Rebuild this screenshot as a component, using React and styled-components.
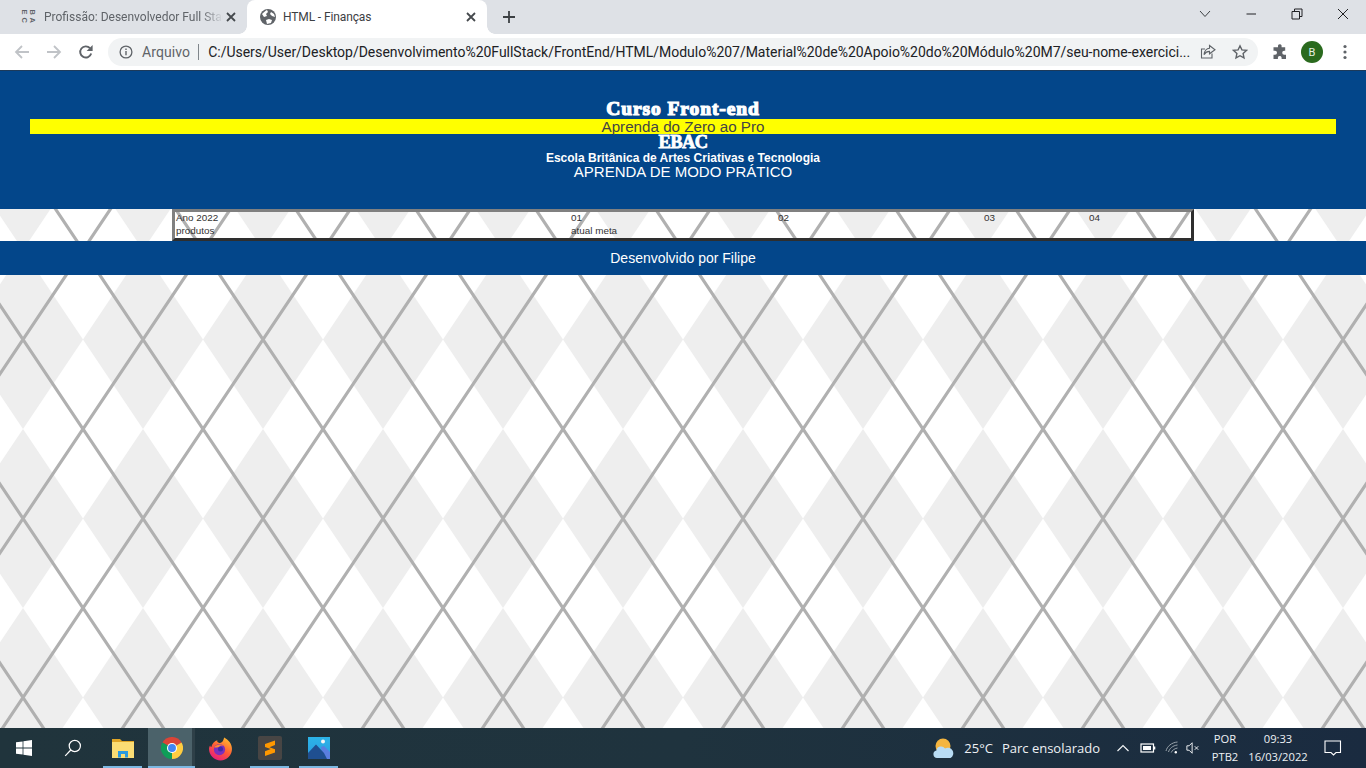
import React from "react";
import styled, { createGlobalStyle } from "styled-components";

const tile = encodeURIComponent(`<svg xmlns="http://www.w3.org/2000/svg" width="120" height="179" viewBox="0 0 120 179"><rect width="120" height="179" fill="#fff"/><path d="M60 0L120 89.5L60 179L0 89.5Z" fill="#eee"/><path d="M-12 -17.900L132 196.900M132 -17.900L-12 196.900" stroke="#b0b0b0" stroke-width="3.200" fill="none"/></svg>`);

const Global = createGlobalStyle`
  html, body { margin: 0; padding: 0; width: 1366px; height: 768px; overflow: hidden; }
  body { font-family: "Liberation Sans", Arial, sans-serif; }
`;

const Screen = styled.div`
  width: 1366px; height: 768px; display: flex; flex-direction: column; overflow: hidden; background: #fff;
`;
const TabStrip = styled.div`
  height: 34px; background: #dee1e6; display: flex; align-items: flex-end; flex: none;
`;
const Tab = styled.div`
  height: 34px; display: flex; align-items: center; box-sizing: border-box; flex: none;
  width: ${p => p.$w}px; padding: 0 8px 0 ${p => p.$pl}px; position: relative;
  background: ${p => (p.$active ? "#fff" : "transparent")};
  border-radius: 8px 8px 0 0;
  color: ${p => (p.$active ? "#3c4043" : "#5f6368")};
`;
const TabCurve = styled.span`
  position: absolute; bottom: 0; width: 8px; height: 8px; ${p => (p.$left ? "left:-8px" : "right:-8px")};
  background: radial-gradient(circle at ${p => (p.$left ? "0 0" : "100% 0")}, transparent 7.5px, #fff 8px);
`;
const TabTitle = styled.span`
  font: 12px "Roboto", sans-serif; margin-left: ${p => (p.$fade ? 8 : 7)}px; flex: 1; white-space: nowrap; overflow: hidden; width: 0;
  letter-spacing: ${p => (p.$fade ? "0" : "-.12px")};
  ${p => p.$fade && "-webkit-mask-image: linear-gradient(90deg,#000 88%,transparent 100%);"}
`;
const NewTab = styled.div`
  margin-left: 14px; width: 16px; height: 34px; display: flex; align-items: center; justify-content: center;
`;
const WindowBtns = styled.div`
  margin-left: auto; display: flex; height: 28px; align-self: flex-start; align-items: center;
`;
const WinBtn = styled.div`
  width: 46px; height: 28px; display: flex; align-items: center; justify-content: center;
`;
const Toolbar = styled.div`
  height: 37px; background: #fff; display: flex; align-items: center; flex: none; box-sizing: border-box; padding: 0 0 0 14px;
  border-bottom: 1px solid #1d3a5a;
`;
const NavIcon = styled.div`
  width: ${p => p.$w}px; display: flex; align-items: center; flex: none; margin-left: ${p => p.$ml || 0}px;
`;
const Omnibox = styled.div`
  width: 1150px; height: 28px; border-radius: 14px; background: #f1f3f4; display: flex; align-items: center; flex: none;
  box-sizing: border-box; padding-left: 11px; font-family: "Roboto", sans-serif; font-size: 14px; color: #202124; margin-top: -1px;
`;
const Chip = styled.span`
  color: #5f6368; margin-left: 9px; font-size: 14px; letter-spacing: .1px;
`;
const Sep = styled.span`
  width: 1px; height: 16px; background: #80868b; margin: 0 9px 0 8px;
`;
const Url = styled.span`
  font-size: 14px; white-space: nowrap; width: 982px; flex: none; letter-spacing: -.024px; color: #202124;
`;
const OmniIcons = styled.div`
  display: flex; align-items: center; gap: 16px; margin-left: 10px;
`;
const Avatar = styled.div`
  width: 22px; height: 22px; border-radius: 50%; background: #2a6a1e; color: #e8f0e4; font: 11px "Roboto", sans-serif;
  display: flex; align-items: center; justify-content: center; flex: none; margin-left: 13px;
`;
const Right = styled.div`
  display: flex; align-items: center; margin-left: 14px; flex: none;
`;
const Page = styled.main`
  flex: 1; min-height: 0; background: #fff url("data:image/svg+xml,${tile}") -37px 0 repeat;
`;
const Header = styled.header`
  height: 138px; background: #03468a; box-sizing: border-box; padding: 29px 30px 0; text-align: center; color: #fff;
`;
const Title = styled.h1`
  margin: 0; height: 19px; font: 700 19.5px/17px "Liberation Serif", serif; -webkit-text-stroke: 1.2px #fff; letter-spacing: .9px;
`;
const Slogan = styled.p`
  margin: 0; height: 15px; background: #ff0; color: #444; font-size: 15.2px; line-height: 15px;
`;
const Brand = styled.h2`
  margin: 0; font: 700 18.5px/16px "Liberation Serif", serif; -webkit-text-stroke: .8px #fff; letter-spacing: -.6px;
`;
const School = styled.p`
  margin: 0; font-weight: 700; font-size: 12px; line-height: 16px;
`;
const Motto = styled.p`
  margin: -2px 0 0; font-size: 15px; line-height: 15px;
`;
const Table = styled.table`
  width: 1022px; height: 32px; margin-left: 172px; border-collapse: separate; border-spacing: 0; box-sizing: border-box;
  border-width: 3px; border-style: solid; border-color: #808080 #2e2e2e #2e2e2e #808080;
  font-size: 9.9px; color: #333; table-layout: fixed;
`;
const Cell = styled.td`
  padding: 0 0 1px 1px; line-height: 12px; height: 12px; width: ${p => p.$w}px;
`;
const Footer = styled.footer`
  height: 34px; background: #03468a; color: #fff; font-size: 14px; display: flex; align-items: center; justify-content: center;
`;
const Taskbar = styled.div`
  height: 40px; flex: none; display: flex; align-items: center; background: linear-gradient(90deg, #20343c 0%, #1f333e 50%, #1a2b40 100%); color: #eef1f4;
  font-family: "Open Sans", "Noto Sans", sans-serif;
`;
const Start = styled.div`
  width: 49px; height: 40px; display: flex; align-items: center; justify-content: center; flex: none; box-sizing: border-box; padding-right: 2px;
`;
const TaskBtn = styled.div`
  width: 49px; height: 40px; display: flex; align-items: center; justify-content: center; position: relative; flex: none; box-sizing: border-box;
  padding-right: ${p => p.$pr || 0}px;
  ${p => p.$on && "background: linear-gradient(90deg, transparent 1px, #4b626a 1px, #4b626a 45px, #2e4048 45px, #2e4048 48px, transparent 48px);"}
  &::after { content: ""; display: ${p => (p.$run ? "block" : "none")}; position: absolute; left: ${p => (p.$on ? "1px" : "5px")}; right: ${p => (p.$on ? "1px" : "5px")}; bottom: 0; height: 2px; background: #7cb8e2; }
`;
const Tray = styled.div`
  margin-left: auto; display: flex; align-items: center; height: 40px; padding-right: 10px;
`;
const Weather = styled.span`
  font-size: 13px; white-space: nowrap; margin-left: 10px;
`;
const WeatherDesc = styled.span`
  font-size: 13px; white-space: nowrap; margin-left: 9px;
`;
const Stack = styled.div`
  display: flex; flex-direction: column; align-items: center; font-size: 11.2px; line-height: 18px; width: ${p => p.$w}px; flex: none; margin-left: ${p => p.$ml}px;
`;
const TrayIcon = styled.div`
  display: flex; align-items: center; justify-content: center; width: ${p => p.$w}px; flex: none; margin-left: ${p => p.$ml || 0}px;
`;

const X = ({ c = "#45494d" }) => (
  <svg width="16" height="16" viewBox="0 0 16 16"><path d="M4 4l8 8M12 4l-8 8" stroke={c} strokeWidth="1.8" /></svg>
);
const Globe = () => (
  <svg width="16" height="16" viewBox="0 0 16 16">
    <circle cx="8" cy="8" r="8" fill="#5f6368" />
    <path d="M2 5c2-2 3-3 5-4l1 2-2 2 1 2-3 1zM7 15l-1-4 3-1 3 1-1 3zM11 3l3 2 1 3-3-1-2-2z" fill="#fff" />
  </svg>
);
const EbacIcon = () => (
  <svg width="16" height="16" viewBox="0 0 16 16" overflow="visible" fill="#5f6368" fontFamily="Liberation Sans" fontWeight="700" fontSize="7.5">
    <text transform="translate(1 0.5) rotate(90)" x="0" y="-1">E</text>
    <text transform="translate(9 0.5) rotate(90)" x="0" y="-1">B</text>
    <text transform="translate(1 8.5) rotate(90)" x="0" y="-1">C</text>
    <text transform="translate(9 8.5) rotate(90)" x="0" y="-1">A</text>
  </svg>
);
const Arrow = ({ d }) => (
  <svg width="16" height="16" viewBox="0 0 16 16"><path d={d} stroke="#c0c3c7" strokeWidth="1.8" fill="none" /></svg>
);
const Reload = () => (
  <svg width="16" height="16" viewBox="0 0 16 16" fill="none">
    <path d="M13.2 9.500A5.600 5.600 0 1 1 12 4.200" stroke="#5f6368" strokeWidth="1.900" />
    <path d="M14.600 1v6h-6z" fill="#5f6368" />
  </svg>
);
const Info = () => (
  <svg width="14" height="14" viewBox="0 0 14 14" fill="none">
    <circle cx="7" cy="7" r="5.900" stroke="#5f6368" strokeWidth="1.300" />
    <path d="M7 6v4.200M7 3.600v1.300" stroke="#5f6368" strokeWidth="1.400" />
  </svg>
);
const Share = () => (
  <svg width="16" height="16" viewBox="0 0 16 16" fill="none" stroke="#5f6368" strokeWidth="1.100">
    <path d="M12 9.500V14H1.500V5H5" />
    <path d="M9.500 1.500l5.500 4.300-5.500 4V7.400C7 7.400 5.500 8.400 4 10.600 4.500 7 6.500 4.400 9.500 4.200z" />
  </svg>
);
const Star = () => (
  <svg width="16" height="16" viewBox="0 0 16 16">
    <path d="M8 1.800l1.900 4.100 4.500.5-3.300 3 .9 4.500L8 11.700l-4 2.200.9-4.500-3.300-3 4.500-.5z" fill="none" stroke="#5f6368" strokeWidth="1.400" />
  </svg>
);
const Puzzle = () => (
  <svg width="16" height="16" viewBox="0 0 16 16">
    <path d="M6 1.500a1.900 1.900 0 0 1 3.600 0V3.300h3.600v3.400h-1a2 2 0 1 0 0 4h1.800V15H9.600v-1.600a1.900 1.900 0 0 0-3.700 0V15H1.500v-4.200H3a2 2 0 1 0 0-4H1.500V3.300H6z" fill="#5f6368" />
  </svg>
);
const Dots = () => (
  <svg width="4" height="16" viewBox="0 0 4 16" fill="#5f6368">
    <circle cx="2" cy="2.500" r="1.600" /><circle cx="2" cy="8" r="1.600" /><circle cx="2" cy="13.500" r="1.600" />
  </svg>
);
const Windows = () => (
  <svg width="16" height="16" viewBox="0 0 16 16" fill="#fff">
    <path d="M0 2.300l6.600-.9v6.200H0zM7.400 1.300L16 0v7.600H7.400zM0 8.400h6.600v6.200L0 13.700zM7.400 8.400H16V16l-8.600-1.300z" />
  </svg>
);
const Search = () => (
  <svg width="18" height="18" viewBox="0 0 18 18" fill="none" stroke="#fff" strokeWidth="1.200">
    <circle cx="10.800" cy="7" r="5.600" /><path d="M6.800 11L1.200 16.800" />
  </svg>
);
const Explorer = () => (
  <svg width="22" height="19" viewBox="0 0 22 19">
    <path d="M0 0h8l2 2h12v17H0z" fill="#e0a526" />
    <rect x="0" y="3" width="22" height="16" fill="#fbdd74" />
    <path d="M6 18.500V12h10v6.500h-3V15H9v3.500z" fill="#2a9ae0" />
  </svg>
);
const Chrome = () => (
  <svg width="22" height="22" viewBox="0 0 48 48">
    <path d="M24 24L44.800 12A24 24 0 0 0 3.200 12z" fill="#db4437" />
    <path d="M24 24L3.200 12A24 24 0 0 0 24 48z" fill="#0f9d58" />
    <path d="M24 24L24 48A24 24 0 0 0 44.800 12z" fill="#ffcd40" />
    <circle cx="24" cy="24" r="11" fill="#fff" /><circle cx="24" cy="24" r="8.600" fill="#4285f4" />
  </svg>
);
const Firefox = () => (
  <svg width="25" height="25" viewBox="0 0 24 24">
    <defs>
      <linearGradient id="ff" x1="0.8" y1="0" x2="0.2" y2="1"><stop offset="0" stopColor="#ffbd2e" /><stop offset=".5" stopColor="#ff5a36" /><stop offset="1" stopColor="#e31587" /></linearGradient>
    </defs>
    <path d="M2 9c.4 1 .8 1.400 1.200 1.600C4 7 6.500 4.600 9 4c-.6 1.600.4 2.200 2 2.600C14 7 15 3.500 15.500 1.500c4 2 7.500 6 7.500 11A11 11 0 0 1 1 12.500C1 11 1.400 10 2 9z" fill="url(#ff)" />
    <circle cx="11" cy="13" r="5.400" fill="#7b2fbe" />
    <circle cx="12" cy="12.500" r="2.400" fill="#3f2aa8" />
    <path d="M6 11c2-3 6-3.500 9-1.800-2-.2-3.600.2-4.500 1.300C9 11 7.500 11 6 11z" fill="#ff8a2e" />
  </svg>
);
const Sublime = () => (
  <svg width="24" height="24" viewBox="0 0 24 24">
    <rect width="24" height="24" rx="2" fill="#474544" />
    <path d="M17 4.500V9l-5.500 2.200L17 13.200V16.500L7 20v-4.800l5.700-2.200L7 11V8z" fill="#ff9800" />
  </svg>
);
const Photos = () => (
  <svg width="22" height="22" viewBox="0 0 22 22">
    <defs><linearGradient id="ph" x1="0" y1="0" x2="0" y2="1"><stop offset="0" stopColor="#2cb4e8" /><stop offset="1" stopColor="#2a9ce0" /></linearGradient></defs>
    <rect width="22" height="22" fill="url(#ph)" />
    <circle cx="15" cy="4.500" r="2" fill="#f4f4f4" />
    <path d="M13 10l3-1 6 6v7H15z" fill="#5a7ee0" />
    <path d="M0 16L8 7.500l8 8.500 3 6H0z" fill="#1f4f90" />
  </svg>
);
const Cloud = () => (
  <svg width="21" height="21" viewBox="0 0 21 21">
    <circle cx="10" cy="8" r="7.500" fill="#f4b53f" />
    <path d="M4 20a3.800 3.800 0 0 1-.6-7.500A4.800 4.800 0 0 1 12 10.400 4.800 4.800 0 0 1 17.500 20z" fill="#b8dcf4" />
  </svg>
);
const Chevron = () => (
  <svg width="14" height="14" viewBox="0 0 14 14" fill="none" stroke="#f0f3f5" strokeWidth="1.200"><path d="M1.500 10L7 4.500 12.500 10" /></svg>
);
const Battery = () => (
  <svg width="16" height="12" viewBox="0 0 16 12" fill="none">
    <rect x="1" y="2" width="12.500" height="8" stroke="#fff" strokeWidth="1.200" />
    <rect x="3" y="4" width="8" height="4" fill="#fff" />
    <rect x="14" y="4.500" width="1.300" height="3" fill="#fff" />
  </svg>
);
const Wifi = () => (
  <svg width="14" height="14" viewBox="0 0 14 14" fill="none" stroke="#9aa4ac" strokeWidth="1">
    <path d="M1 10C2 5.500 6.500 1.500 12.500 1M3.500 11C4.200 8 7.500 4.500 12.500 4M6.200 11.500C6.800 9.800 9.200 7.500 12.500 7" />
    <circle cx="10.800" cy="11.200" r="1.200" fill="#fff" stroke="none" />
  </svg>
);
const Mute = () => (
  <svg width="16" height="14" viewBox="0 0 16 14" fill="none" stroke="#f0f3f5" strokeWidth="1.100">
    <path d="M1 4.500h2.500L7 1v12L3.500 9.500H1zM10 5l4 4M14 5l-4 4" />
  </svg>
);
const Notify = () => (
  <svg width="18" height="16" viewBox="0 0 18 16" fill="none" stroke="#fff" strokeWidth="1.100">
    <path d="M1 1h15.500v11.500H12L9.500 15 7 12.500H1z" />
  </svg>
);

export default function App() {
  return (
    <Screen>
      <Global />
      <TabStrip>
        <Tab $w={247} $pl={20}>
          <EbacIcon />
          <TabTitle $fade>Profissão: Desenvolvedor Full Stack</TabTitle>
          <X />
        </Tab>
        <Tab $w={240} $pl={13} $active>
          <TabCurve $left /><Globe />
          <TabTitle>HTML - Finanças</TabTitle>
          <X /><TabCurve />
        </Tab>
        <NewTab>
          <svg width="14" height="14" viewBox="0 0 14 14"><path d="M7 1v12M1 7h12" stroke="#3c4043" strokeWidth="1.800" /></svg>
        </NewTab>
        <WindowBtns>
          <WinBtn>
            <svg width="12" height="8" viewBox="0 0 12 8" fill="none" stroke="#3c4043"><path d="M1 1l5 5.500L11 1" /></svg>
          </WinBtn>
          <WinBtn>
            <svg width="12" height="2" viewBox="0 0 12 2"><path d="M1.500 1h9.500" stroke="#202124" /></svg>
          </WinBtn>
          <WinBtn>
            <svg width="12" height="12" viewBox="0 0 12 12" fill="none" stroke="#202124"><path d="M1 3.500h7.500V11H1zM3.500 3.500V1H11v7.500H8.500" /></svg>
          </WinBtn>
          <WinBtn>
            <svg width="12" height="12" viewBox="0 0 12 12" fill="none" stroke="#202124"><path d="M1 1l10 10M11 1L1 11" /></svg>
          </WinBtn>
        </WindowBtns>
      </TabStrip>
      <Toolbar>
        <NavIcon $w={32}><Arrow d="M15 8H2M8 2L2 8l6 6" /></NavIcon>
        <NavIcon $w={32}><Arrow d="M1 8h13M8 2l6 6-6 6" /></NavIcon>
        <NavIcon $w={30}><Reload /></NavIcon>
        <Omnibox>
          <Info />
          <Chip>Arquivo</Chip>
          <Sep />
          <Url>C:/Users/User/Desktop/Desenvolvimento%20FullStack/FrontEnd/HTML/Modulo%207/Material%20de%20Apoio%20do%20Módulo%20M7/seu-nome-exercici...</Url>
          <OmniIcons><Share /><Star /></OmniIcons>
        </Omnibox>
        <Right>
          <Puzzle />
          <Avatar>B</Avatar>
          <NavIcon $w={4} $ml={20}><Dots /></NavIcon>
        </Right>
      </Toolbar>
      <Page>
        <Header>
          <Title>Curso Front-end</Title>
          <Slogan>Aprenda do Zero ao Pro</Slogan>
          <Brand>EBAC</Brand>
          <School>Escola Britânica de Artes Criativas e Tecnologia</School>
          <Motto>APRENDA DE MODO PRÁTICO</Motto>
        </Header>
        <Table>
          <tbody>
            <tr>
              <Cell $w={394}>Ano 2022</Cell>
              <Cell $w={206}>01</Cell>
              <Cell $w={205}>02</Cell>
              <Cell $w={104}>03</Cell>
              <Cell>04</Cell>
            </tr>
            <tr>
              <Cell>produtos</Cell>
              <Cell>atual meta</Cell>
              <Cell />
              <Cell />
              <Cell />
            </tr>
          </tbody>
        </Table>
        <Footer>Desenvolvido por Filipe</Footer>
      </Page>
      <Taskbar>
        <Start><Windows /></Start>
        <TaskBtn $pr={2}><Search /></TaskBtn>
        <TaskBtn $run><Explorer /></TaskBtn>
        <TaskBtn $on $run><Chrome /></TaskBtn>
        <TaskBtn><Firefox /></TaskBtn>
        <TaskBtn $run><Sublime /></TaskBtn>
        <TaskBtn $run><Photos /></TaskBtn>
        <Tray>
          <Cloud />
          <Weather>25°C</Weather>
          <WeatherDesc>Parc ensolarado</WeatherDesc>
          <TrayIcon $w={30} $ml={8}><Chevron /></TrayIcon>
          <TrayIcon $w={20}><Battery /></TrayIcon>
          <TrayIcon $w={28}><Wifi /></TrayIcon>
          <TrayIcon $w={14}><Mute /></TrayIcon>
          <Stack $w={36} $ml={7}><span>POR</span><span>PTB2</span></Stack>
          <Stack $w={64} $ml={3}><span>09:33</span><span>16/03/2022</span></Stack>
          <TrayIcon $w={46}><Notify /></TrayIcon>
        </Tray>
      </Taskbar>
    </Screen>
  );
}
